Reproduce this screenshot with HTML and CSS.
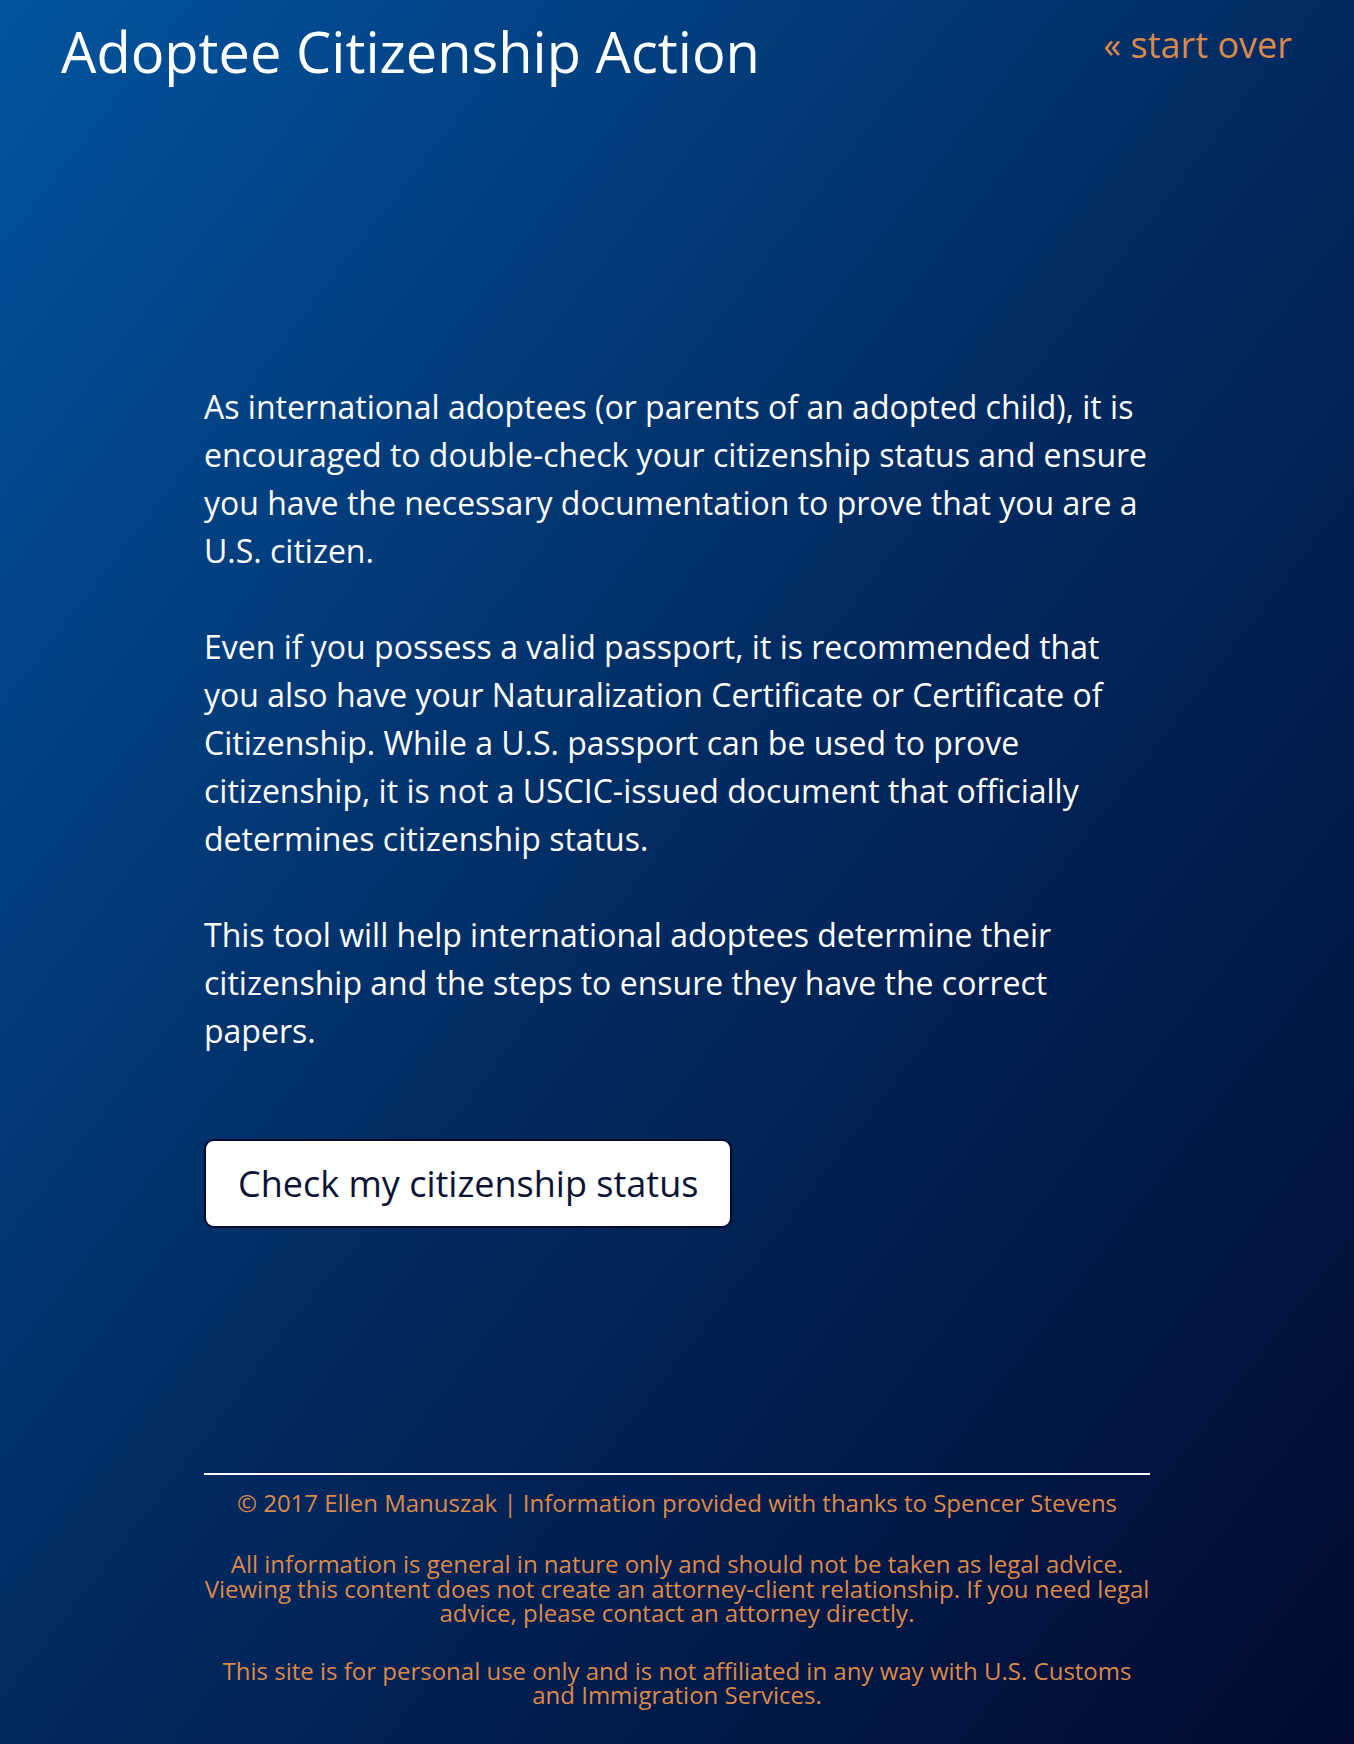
FILE: index.html
```html
<!DOCTYPE html>
<html lang="en">
<head>
<meta charset="utf-8">
<title>Adoptee Citizenship Action</title>
<link rel="stylesheet" href="styles.css">
</head>
<body>
<div class="page">
  <header class="header">
    <h1 class="title">Adoptee Citizenship Action</h1>
    <a class="restart" href="#">« start over</a>
  </header>
  <main class="content">
    <p>As international adoptees (or parents of an adopted child), it is encouraged to double-check your citizenship status and ensure you have the necessary documentation to prove that you are a U.S. citizen.</p>
    <p>Even if you possess a valid passport, it is recommended that you also have your Naturalization Certificate or Certificate of Citizenship. While a U.S. passport can be used to prove citizenship, it is not a USCIC-issued document that officially determines citizenship status.</p>
    <p>This tool will help international adoptees determine their citizenship and the steps to ensure they have the correct papers.</p>
    <button class="btn" type="button">Check my citizenship status</button>
  </main>
  <footer class="footer">
    <p class="credits">© 2017 Ellen Manuszak | Information provided with thanks to Spencer Stevens</p>
    <p class="legal">All information is general in nature only and should not be taken as legal advice. Viewing this content does not create an attorney-client relationship. If you need legal advice, please contact an attorney directly.</p>
    <p class="legal">This site is for personal use only and is not affiliated in any way with U.S. Customs and Immigration Services.</p>
  </footer>
</div>
</body>
</html>
```

FILE: styles.css
```css
html, body {
  margin: 0;
  padding: 0;
}
body {
  font-family: "Open Sans", "Noto Sans", sans-serif;
  color: #fff;
  background: linear-gradient(to bottom right, #02549e 0%, #012a60 50%, #020a30 100%);
  min-height: 1744px;
}
.page {
  min-height: 1744px;
  display: flex;
  flex-direction: column;
}
.header {
  display: flex;
  justify-content: space-between;
  align-items: flex-start;
  padding: 0 62px 0 61px;
}
.title {
  margin: 15px 0 0;
  font-size: 56px;
  font-weight: 400;
  line-height: 72px;
  color: #fff;
}
.restart {
  margin-top: 21px;
  font-size: 36px;
  line-height: 48px;
  color: #d98a4c;
  text-decoration: none;
}
.content {
  width: 946px;
  margin: 0 auto;
  padding-top: 296px;
}
.content p {
  margin: 0 0 48px;
  font-size: 32px;
  line-height: 48px;
}
.btn {
  margin-top: 36px;
  font-family: "Open Sans", "Noto Sans", sans-serif;
  font-size: 36px;
  color: #0a1235;
  background: #fff;
  border: 2px solid #050b2a;
  border-radius: 10px;
  height: 89px;
  padding: 0 32px;
}
.footer {
  width: 946px;
  margin: 245px auto 0;
  border-top: 2px solid #fff;
  text-align: center;
  color: #dc8a4b;
  font-size: 24px;
}
.footer p {
  margin: 0;
}
.credits {
  padding-top: 12px;
  line-height: 32px;
}
.legal {
  line-height: 24.5px;
  margin-top: 33px !important;
}
```
